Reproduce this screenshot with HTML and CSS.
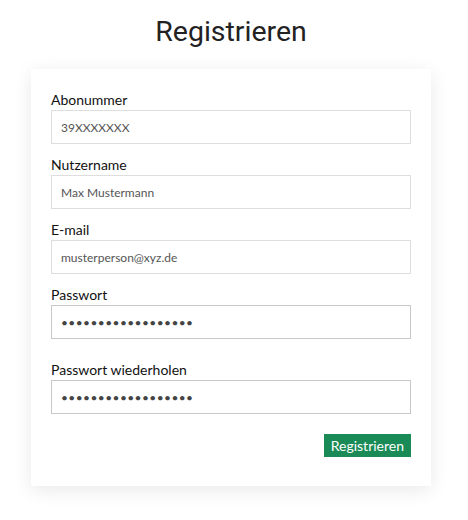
FILE: index.html
```html
<!DOCTYPE html>
<html lang="de">
<head>
<meta charset="utf-8">
<title>Registrieren</title>
<link rel="stylesheet" href="styles.css">
</head>
<body>
<div class="wrap">
  <h1 class="title">Registrieren</h1>
  <form class="card">
    <div class="field">
      <label class="label">Abonummer</label>
      <input class="input" type="text" value="39XXXXXXX">
    </div>
    <div class="field">
      <label class="label">Nutzername</label>
      <input class="input" type="text" value="Max Mustermann">
    </div>
    <div class="field">
      <label class="label">E-mail</label>
      <input class="input" type="text" value="musterperson@xyz.de">
    </div>
    <div class="field field-pw">
      <label class="label">Passwort</label>
      <input class="input input-pw" type="password" value="xxxxxxxxxxxxxxxxxx">
    </div>
    <div class="field">
      <label class="label">Passwort wiederholen</label>
      <input class="input input-pw" type="password" value="xxxxxxxxxxxxxxxxxx">
    </div>
    <div class="actions">
      <button class="btn" type="button">Registrieren</button>
    </div>
  </form>
</div>
</body>
</html>
```

FILE: styles.css
```css
* { box-sizing: border-box; }
html, body { margin: 0; padding: 0; background: #fff; }
body { font-family: "Lato", "Liberation Sans", sans-serif; }
.wrap {
  width: 400px;
  margin-left: 31px;
  padding-bottom: 30px;
}
.title {
  margin: 0;
  padding-top: 15px;
  height: 69px;
  text-align: center;
  font-family: "Roboto", sans-serif;
  font-weight: 400;
  font-size: 28.5px;
  line-height: 34px;
  color: #222;
}
.card {
  background: #fff;
  box-shadow: 0 4px 18px rgba(0,0,0,0.09);
  padding: 20px 20px 29px;
  display: flex;
  flex-direction: column;
}
.field {
  display: flex;
  flex-direction: column;
  margin-bottom: 10px;
}
.field-pw { margin-bottom: 20px; }
.label {
  font-size: 14px;
  line-height: 21px;
  color: #111;
}
.input {
  height: 34px;
  width: 360px;
  border: 1px solid #dedede;
  padding: 0 9px;
  font-family: "Lato", sans-serif;
  font-size: 12px;
  color: #555;
  background: #fff;
  outline: none;
}
.input-pw {
  border-color: #c8c8c8;
  color: #444;
  font-size: 12px;
  letter-spacing: 0.4px;
}
.actions {
  display: flex;
  justify-content: flex-end;
  margin-top: 10px;
}
.btn {
  height: 23px;
  padding: 0 7px;
  border: none;
  background: #1a8b56;
  color: #fff;
  font-family: "Lato", sans-serif;
  font-size: 14px;
  line-height: 23px;
}
```
